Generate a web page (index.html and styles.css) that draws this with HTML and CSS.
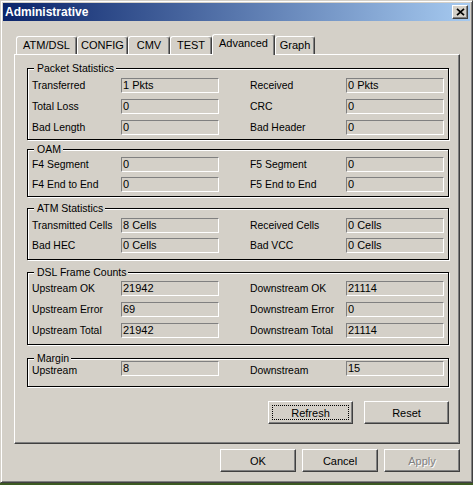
FILE: index.html
```html
<!DOCTYPE html>
<html>
<head>
<meta charset="utf-8">
<title>Administrative</title>
<link rel="stylesheet" href="styles.css">
</head>
<body>
<div class="window">
  <div class="titlebar">
    <span class="title">Administrative</span>
    <button class="close" type="button" aria-label="Close">
      <svg width="9" height="8" viewBox="0 0 9 8"><path d="M1 0.8 L8 7.2 M8 0.8 L1 7.2" stroke="#000" stroke-width="1.7" fill="none"/></svg>
    </button>
  </div>
  <div class="dialog">
    <div class="tabs">
      <div class="tab w-atm">ATM/DSL</div>
      <div class="tab w-config">CONFIG</div>
      <div class="tab w-cmv">CMV</div>
      <div class="tab w-test">TEST</div>
      <div class="tab w-adv active">Advanced</div>
      <div class="tab w-graph">Graph</div>
    </div>
    <div class="panel">
      <div class="group g-packet">
        <div class="group-title">Packet Statistics</div>
        <div class="grid">
          <span class="lbl">Transferred</span><span class="field">1 Pkts</span>
          <span class="lbl r">Received</span><span class="field">0 Pkts</span>
          <span class="lbl">Total Loss</span><span class="field">0</span>
          <span class="lbl r">CRC</span><span class="field">0</span>
          <span class="lbl">Bad Length</span><span class="field">0</span>
          <span class="lbl r">Bad Header</span><span class="field">0</span>
        </div>
      </div>
      <div class="group g-oam">
        <div class="group-title">OAM</div>
        <div class="grid">
          <span class="lbl">F4 Segment</span><span class="field">0</span>
          <span class="lbl r">F5 Segment</span><span class="field">0</span>
          <span class="lbl">F4 End to End</span><span class="field">0</span>
          <span class="lbl r">F5 End to End</span><span class="field">0</span>
        </div>
      </div>
      <div class="group g-atm">
        <div class="group-title">ATM Statistics</div>
        <div class="grid">
          <span class="lbl">Transmitted Cells</span><span class="field">8 Cells</span>
          <span class="lbl r">Received Cells</span><span class="field">0 Cells</span>
          <span class="lbl">Bad HEC</span><span class="field">0 Cells</span>
          <span class="lbl r">Bad VCC</span><span class="field">0 Cells</span>
        </div>
      </div>
      <div class="group g-dsl">
        <div class="group-title">DSL Frame Counts</div>
        <div class="grid">
          <span class="lbl">Upstream OK</span><span class="field">21942</span>
          <span class="lbl r">Downstream OK</span><span class="field">21114</span>
          <span class="lbl">Upstream Error</span><span class="field">69</span>
          <span class="lbl r">Downstream Error</span><span class="field">0</span>
          <span class="lbl">Upstream Total</span><span class="field">21942</span>
          <span class="lbl r">Downstream Total</span><span class="field">21114</span>
        </div>
      </div>
      <div class="group g-margin">
        <div class="group-title">Margin</div>
        <div class="grid">
          <span class="lbl">Upstream</span><span class="field">8</span>
          <span class="lbl r">Downstream</span><span class="field">15</span>
        </div>
      </div>
      <div class="actions">
        <button class="btn w85 focused" type="button">Refresh</button>
        <button class="btn w85" type="button">Reset</button>
      </div>
    </div>
    <div class="footer">
      <button class="btn w76" type="button">OK</button>
      <button class="btn w76" type="button">Cancel</button>
      <button class="btn w76 disabled" type="button">Apply</button>
    </div>
  </div>
</div>
</body>
</html>
```
FILE: styles.css
```css
* { box-sizing: border-box; }

body {
  margin: 0;
  background: #3d5a22;
  font-family: "Liberation Sans", Arial, sans-serif;
  font-size: 11px;
  color: #000;
}

.window {
  width: 473px;
  background: #d4d0c8;
  border: 1px solid;
  border-color: #d4d0c8 #404040 #404040 #d4d0c8;
  box-shadow: inset 1px 1px 0 #fff, inset -1px -1px 0 #808080;
  padding: 2px;
}

.titlebar {
  height: 18px;
  display: flex;
  align-items: center;
  justify-content: space-between;
  background: linear-gradient(to right, #0a246a, #a6caf0);
  padding: 0 2px 0 2px;
}

.title {
  color: #fff;
  font-weight: bold;
  font-size: 12px;
  line-height: 14px;
}

.close {
  width: 16px;
  height: 14px;
  padding: 0;
  background: #d4d0c8;
  border: 1px solid;
  border-color: #fff #404040 #404040 #fff;
  box-shadow: inset -1px -1px 0 #808080;
  display: flex;
  align-items: center;
  justify-content: center;
}

.close svg { display: block; }

.dialog {
  padding: 13px 10px 8px 11px;
}

.tabs {
  display: flex;
  align-items: flex-end;
  height: 20px;
  padding-left: 2px;
}

.tab {
  height: 18px;
  border: 1px solid;
  border-bottom: none;
  border-color: #fff #404040 #404040 #fff;
  box-shadow: inset -1px 0 0 #808080;
  border-radius: 3px 3px 0 0;
  display: flex;
  align-items: center;
  justify-content: center;
  background: #d4d0c8;
  line-height: 13px;
}

.tab.active {
  height: 21px;
  margin-bottom: -1px;
  padding-bottom: 3px;
  position: relative;
  z-index: 1;
}

.w-atm { width: 61px; }
.w-config { width: 51px; }
.w-cmv { width: 42px; }
.w-test { width: 42px; }
.w-adv { width: 63px; }
.w-graph { width: 40px; }

.panel {
  border: 1px solid;
  border-color: #fff #404040 #404040 #fff;
  box-shadow: inset -1px -1px 0 #808080;
  padding: 13px 10px 19px 12px;
}

.group {
  border: 1px solid #000;
  box-shadow: 1px 1px 0 #fff, inset 1px 1px 0 #fff;
  padding: 0 4px 4px 4px;
}

.group-title {
  width: fit-content;
  margin: -7px 0 0 2px;
  padding: 0 2px 0 3px;
  font-size: 10.5px;
  line-height: 13px;
  background: #d4d0c8;
}

.grid {
  display: grid;
  grid-template-columns: 89px 98px 127px 98px;
  grid-auto-rows: 15px;
  row-gap: 6px;
  margin-top: 3px;
}

.lbl {
  font-size: 10.4px;
  line-height: 15px;
  white-space: nowrap;
}

.lbl.r { padding-left: 31px; }

.field {
  border: 1px solid;
  border-color: #808080 #fff #fff #808080;
  background: #d4d0c8;
  padding-left: 1px;
  line-height: 13px;
  white-space: nowrap;
}

.g-oam { margin-top: 9px; padding-bottom: 4px; }
.g-oam .grid { margin-top: 1px; row-gap: 5px; }

.g-atm { margin-top: 11px; padding-bottom: 6px; }
.g-atm .grid { margin-top: 3px; row-gap: 5px; }

.g-dsl { margin-top: 12px; padding-bottom: 6px; }
.g-dsl .grid { margin-top: 2px; }

.g-margin { margin-top: 13px; padding-bottom: 10px; }
.g-margin .grid { margin-top: -4px; }
.g-margin .lbl { padding-top: 2px; }

.actions {
  display: flex;
  justify-content: flex-end;
  gap: 11px;
  margin-top: 14px;
}

.footer {
  display: flex;
  justify-content: flex-end;
  gap: 6px;
  margin-top: 5px;
}

.btn {
  height: 23px;
  padding: 0;
  font-family: inherit;
  font-size: 11px;
  color: #000;
  background: #d4d0c8;
  border: 1px solid;
  border-color: #fff #404040 #404040 #fff;
  box-shadow: inset -1px -1px 0 #808080;
}

.w85 { width: 85px; }
.w76 { width: 76px; }

.btn.focused {
  outline: 1px dotted #000;
  outline-offset: -5px;
}

.btn.disabled {
  color: #808080;
  text-shadow: 1px 1px 0 #fff;
}
```
